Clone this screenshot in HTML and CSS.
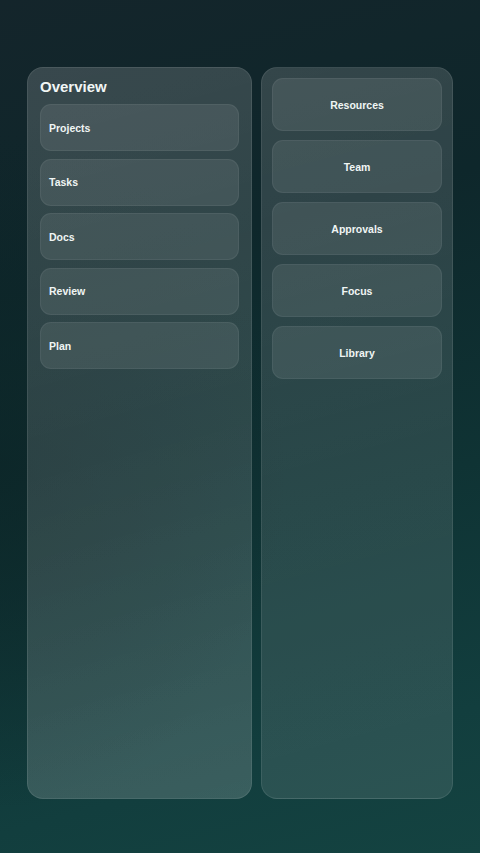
FILE: index.html
```html
<!DOCTYPE html>
<html lang="en">
<head>
<meta charset="utf-8">
<title>Overview</title>
<link rel="stylesheet" href="styles.css">
</head>
<body>
<main class="page">
  <section class="panel panel-left">
    <h1 class="panel-title">Overview</h1>
    <div class="list list-left">
      <div class="card card-left">Projects</div>
      <div class="card card-left">Tasks</div>
      <div class="card card-left">Docs</div>
      <div class="card card-left">Review</div>
      <div class="card card-left">Plan</div>
    </div>
  </section>
  <section class="panel panel-right">
    <div class="list list-right">
      <div class="card card-right">Resources</div>
      <div class="card card-right">Team</div>
      <div class="card card-right">Approvals</div>
      <div class="card card-right">Focus</div>
      <div class="card card-right">Library</div>
    </div>
  </section>
</main>
</body>
</html>
```
FILE: styles.css
```css
html, body {
  margin: 0;
  padding: 0;
}
body {
  width: 480px;
  height: 853px;
  overflow: hidden;
  font-family: "Liberation Sans", Arial, sans-serif;
  color: #eef4f3;
  background:
    radial-gradient(ellipse 60% 40% at 0% 55%, rgba(12, 36, 38, 0.7) 0%, rgba(12, 36, 38, 0) 100%),
    linear-gradient(165deg, #14252b 0%, #0e272b 30%, #0f3334 60%, #123e3e 85%, #144341 100%);
}
.page {
  box-sizing: border-box;
  height: 853px;
  padding: 67px 27px 54px;
  display: grid;
  grid-template-columns: 225px 192px;
  column-gap: 9px;
}
.panel {
  box-sizing: border-box;
  border-radius: 16px;
  border: 1px solid rgba(255, 255, 255, 0.09);
  background: linear-gradient(165deg, rgba(255, 255, 255, 0.16) 0%, rgba(255, 255, 255, 0.13) 50%, rgba(255, 255, 255, 0.17) 100%);
}
.panel-left {
  padding: 10px 12px 12px;
}
.panel-right {
  padding: 10px 10px 12px;
  background: linear-gradient(165deg, rgba(255, 255, 255, 0.15) 0%, rgba(255, 255, 255, 0.11) 55%, rgba(255, 255, 255, 0.1) 100%);
}
.panel-title {
  margin: 0 0 9px;
  font-size: 15px;
  line-height: 17px;
  font-weight: 700;
  color: #f1f6f5;
}
.list {
  display: flex;
  flex-direction: column;
}
.list-left {
  gap: 7.5px;
}
.list-right {
  gap: 9px;
}
.card {
  box-sizing: border-box;
  border-radius: 11px;
  border: 1px solid rgba(255, 255, 255, 0.06);
  background: rgba(255, 255, 255, 0.085);
  font-size: 10.5px;
  font-weight: 700;
  display: flex;
  align-items: center;
  color: #f0f5f4;
}
.card-left {
  height: 47px;
  padding-left: 8px;
}
.card-right {
  height: 53px;
  justify-content: center;
}
```
